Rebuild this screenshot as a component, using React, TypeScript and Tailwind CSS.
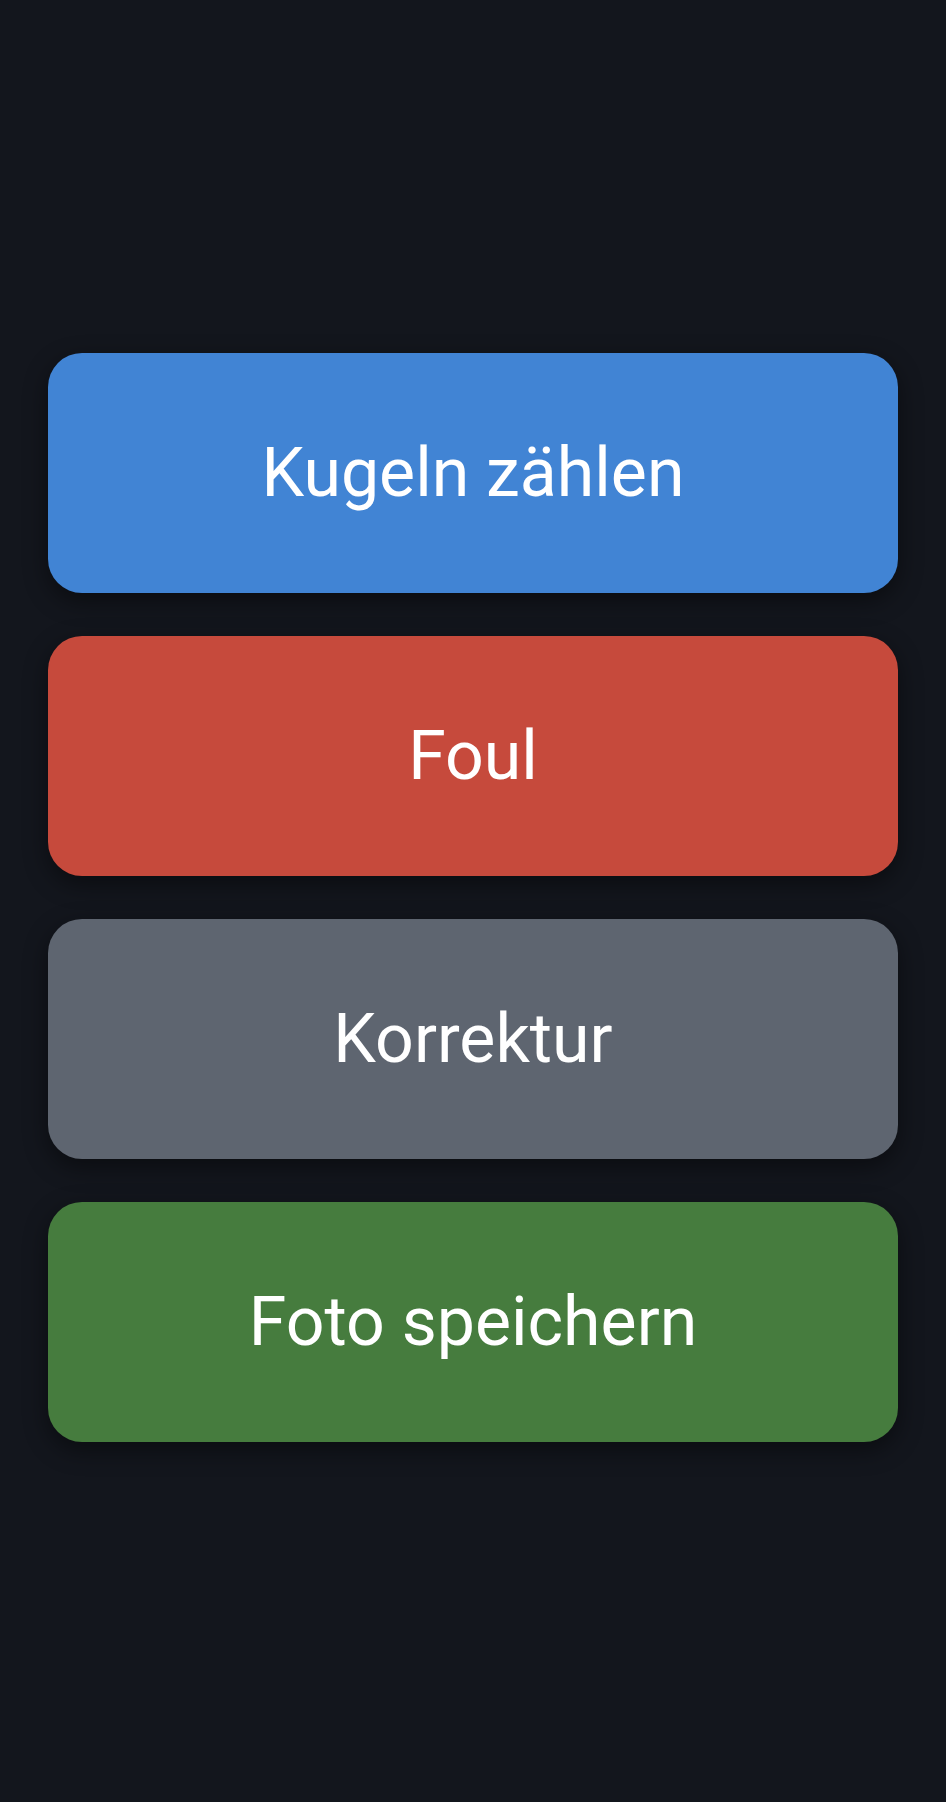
import React from 'react';

const actions = [
  { label: 'Kugeln zählen', className: 'bg-[#4184d4]' },
  { label: 'Foul', className: 'bg-[#c64a3c]' },
  { label: 'Korrektur', className: 'bg-[#5e6570]' },
  { label: 'Foto speichern', className: 'bg-[#467c3e]' },
];

const App: React.FC = () => {
  return (
    <div className="min-h-[1802px] bg-[#13161d] px-[48px] pt-[353px] font-['Roboto',sans-serif]">
      <div className="flex flex-col gap-[43px]">
        {actions.map((action) => (
          <button
            key={action.label}
            className={`${action.className} flex h-[240px] w-full items-center justify-center rounded-[34px] text-[68px] font-normal text-white shadow-[0_8px_24px_rgba(0,0,0,0.45)]`}
          >
            {action.label}
          </button>
        ))}
      </div>
    </div>
  );
};

export default App;
